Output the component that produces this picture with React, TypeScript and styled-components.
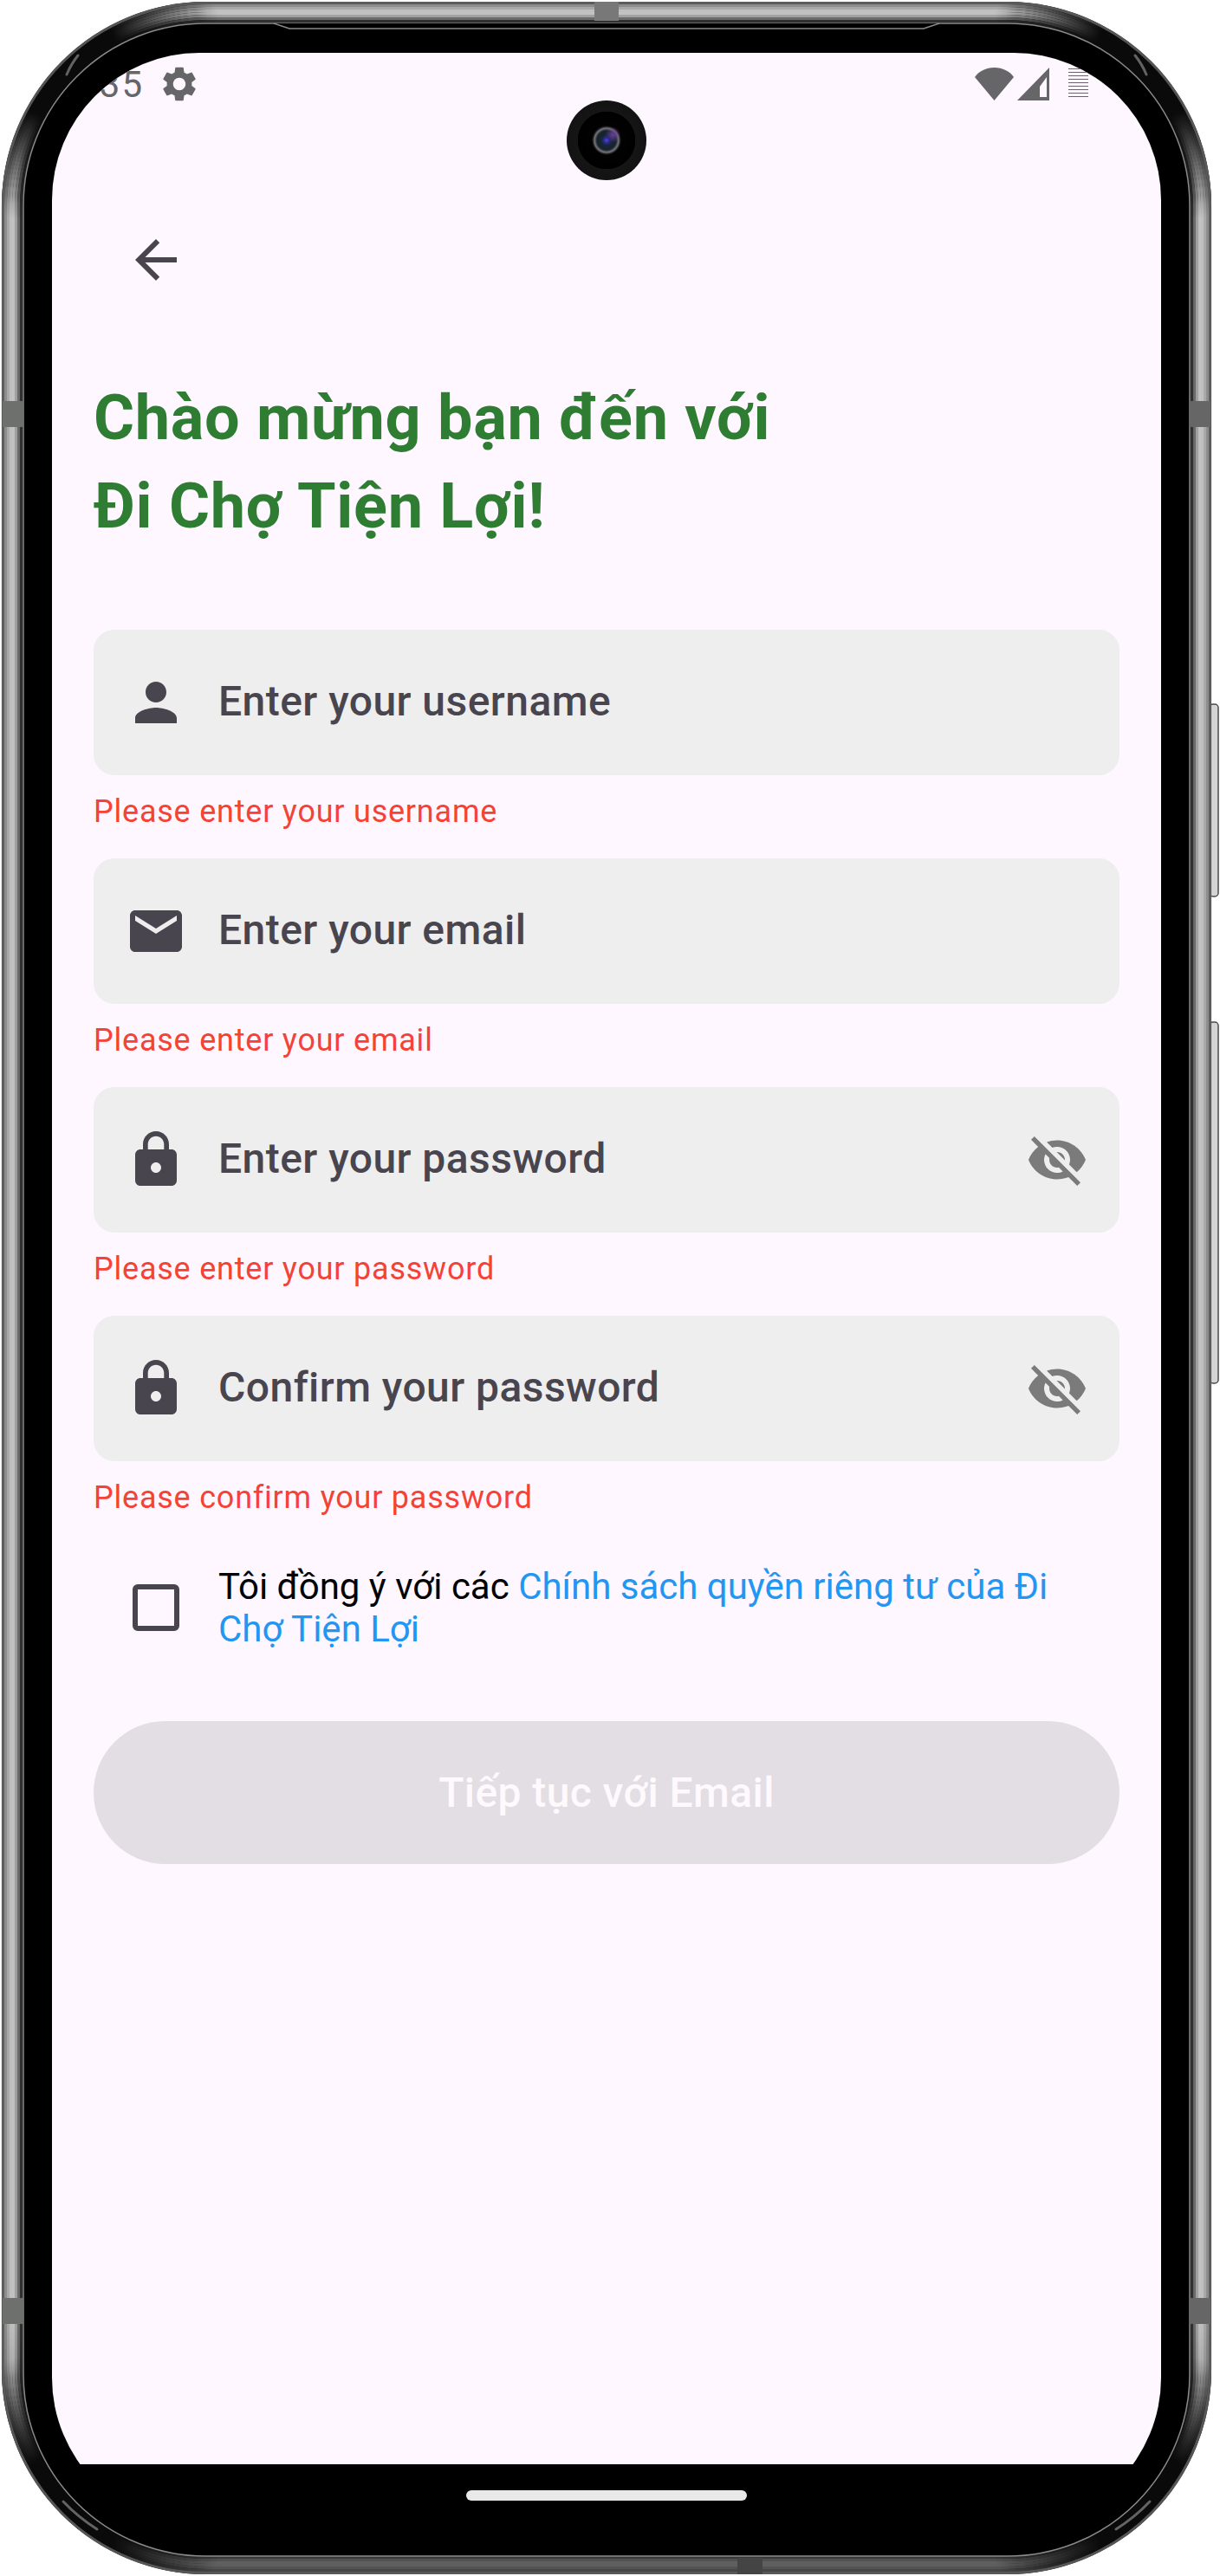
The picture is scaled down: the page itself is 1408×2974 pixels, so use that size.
import styled, { createGlobalStyle } from "styled-components";
import {
	MdArrowBack,
	MdEmail,
	MdLock,
	MdPerson,
	MdSettings,
	MdVisibilityOff,
} from "react-icons/md";
import type { IconType } from "react-icons";

const GlobalStyle = createGlobalStyle`
	html, body {
		margin: 0;
		padding: 0;
		background: #fff;
	}
	* {
		box-sizing: border-box;
	}
`;

const Page = styled.div`
	position: relative;
	width: 1408px;
	height: 2974px;
	overflow: hidden;
	background: #fff;
	font-family: Roboto, "Noto Sans", sans-serif;
`;
const Frame = styled.svg`
	position: absolute;
	top: 0;
	left: 0;
`;
const Bezel = styled.div`
	position: relative;
	padding: 61px 68px 0 60px;
`;
const ScreenClip = styled.div`
	height: 2784px;
	overflow: hidden;
`;
const Screen = styled.div`
	position: relative;
	height: 2854px;
	border-radius: 170px;
	overflow: hidden;
	background: #fef7ff;
`;
const HomeBar = styled.div`
	width: 324px;
	height: 12px;
	margin: 30px 0 0 478px;
	border-radius: 6px;
	background: #e9e9e9;
`;
const StatusBar = styled.div`
	display: flex;
	align-items: center;
	justify-content: space-between;
	height: 38px;
	margin-top: 17px;
	padding: 0 84px 0 14px;
	color: #666568;
`;
const StatusGroup = styled.div<{ $gap: number }>`
	display: flex;
	align-items: center;
	gap: ${(props) => props.$gap}px;
`;
const Clock = styled.span`
	width: 92px;
	font-size: 42px;
	letter-spacing: 2px;
	text-align: right;
	white-space: nowrap;
`;
const BatterySlot = styled.div`
	margin-left: 18px;
`;
const Camera = styled.div`
	position: absolute;
	top: 55px;
	left: 594px;
	width: 92px;
	height: 92px;
	border-radius: 50%;
	background:
		radial-gradient(circle at 50% 50%, #5a3ff0 0, #2a2a90 3px, transparent 6px),
		radial-gradient(circle at 58% 43%, #6a3f9a 0, transparent 9px),
		radial-gradient(
			circle at 50% 50%,
			#1d2a38 0,
			#16222e 11px,
			#77777c 14px,
			#2a2a2c 15.5px,
			#020202 17px,
			#000 33px,
			#151515 33.5px,
			#131313 46px
		);
`;
const BackRow = styled.div`
	display: flex;
	margin-top: 148px;
	padding-left: 84px;
	color: #49454f;
`;
const Content = styled.div`
	padding: 0 48px;
`;
const Title = styled.h1`
	margin: 96px 0 91px;
	font-size: 72px;
	font-weight: 700;
	line-height: 102px;
	letter-spacing: 0.7px;
	color: #2e7d32;
`;
const Field = styled.div`
	display: flex;
	align-items: center;
	gap: 36px;
	height: 168px;
	padding: 0 36px;
	border-radius: 24px;
	background: #eeeeee;
	color: #49454f;
`;
const Placeholder = styled.span`
	flex: 1;
	padding-bottom: 3px;
	font-size: 48px;
	font-weight: 500;
	line-height: 56px;
	letter-spacing: 0.45px;
`;
const EyeIcon = styled(MdVisibilityOff)`
	color: #7b7b7b;
`;
const ErrorText = styled.div`
	margin: 21px 0 33px;
	font-size: 36px;
	line-height: 42px;
	letter-spacing: 0.78px;
	color: #f44336;
`;
const Consent = styled.div`
	display: flex;
	align-items: center;
	gap: 45px;
	margin-top: 57px;
	padding: 0 48px 0 45px;
`;
const CheckBox = styled.div`
	flex: none;
	width: 54px;
	height: 54px;
	border: 6px solid #49454f;
	border-radius: 6px;
`;
const ConsentText = styled.p`
	margin: 0;
	font-size: 42px;
	line-height: 49px;
	color: #000;
`;
const PolicyLink = styled.span`
	color: #2196f3;
`;
const SubmitButton = styled.div`
	display: flex;
	align-items: center;
	justify-content: center;
	height: 165px;
	margin-top: 82px;
	border-radius: 83px;
	background: #e3dde4;
	font-size: 48px;
	font-weight: 500;
	letter-spacing: 0.4px;
	color: #fdf9fd;
`;

const fields: { icon: IconType; label: string; error: string; secret?: boolean }[] = [
	{ icon: MdPerson, label: "Enter your username", error: "Please enter your username" },
	{ icon: MdEmail, label: "Enter your email", error: "Please enter your email" },
	{ icon: MdLock, label: "Enter your password", error: "Please enter your password", secret: true },
	{ icon: MdLock, label: "Confirm your password", error: "Please confirm your password", secret: true },
];

// metal band profile, outer ring first
const bandColors = ["#5c5c5c", "#8c8c8c", "#a8a8a8", "#c0c0c0", "#c2c2c2", "#a2a2a2", "#6c6c6c", "#303030"];

function DeviceFrame() {
	return (
		<Frame width="1408" height="2974" viewBox="0 0 1408 2974">
			<defs>
				<linearGradient id="fade" x1="0" y1="0" x2="0" y2="1">
					<stop offset="0.9" stopColor="#fff" />
					<stop offset="0.985" stopColor="#777" />
				</linearGradient>
				<radialGradient id="blob">
					<stop offset="0.35" stopColor="#000" />
					<stop offset="1" stopColor="#000" stopOpacity="0" />
				</radialGradient>
				<mask id="bandMask" maskUnits="userSpaceOnUse" x="0" y="0" width="1408" height="2974">
					<rect width="1408" height="2974" fill="url(#fade)" />
					<circle cx="70" cy="70" r="190" fill="url(#blob)" />
					<circle cx="1330" cy="70" r="190" fill="url(#blob)" />
					<circle cx="70" cy="2904" r="190" fill="url(#blob)" />
					<circle cx="1330" cy="2904" r="190" fill="url(#blob)" />
				</mask>
			</defs>
			<rect x="1396" y="813" width="10" height="222" rx="4" fill="#d4d4d4" stroke="#4a4a4a" strokeWidth="1.5" />
			<rect x="1396" y="1180" width="10" height="417" rx="4" fill="#d4d4d4" stroke="#4a4a4a" strokeWidth="1.5" />
			<rect x="2" y="2" width="1396" height="2970" rx="236" fill="#0a0a0a" />
			<rect x="3.5" y="3.5" width="1393" height="2967" rx="234" fill="none" stroke="#555" strokeWidth="3" />
			<g mask="url(#bandMask)" fill="none" strokeWidth="3.2">
				{bandColors.map((color, i) => {
					const inset = 3.5 + i * 3;
					return (
						<rect
							key={color + i}
							x={inset}
							y={inset}
							width={1400 - 2 * inset}
							height={2974 - 2 * inset}
							rx={236 - i * 3}
							stroke={color}
						/>
					);
				})}
			</g>
			<g fill="none" stroke="#636363" strokeWidth="3" strokeLinecap="round">
				<path d="M77 86Q82 74 90 64" />
				<path d="M1323 86Q1318 74 1310 64" />
				<path d="M73 2888Q90 2906 112 2920" />
				<path d="M1327 2888Q1310 2906 1288 2920" />
			</g>
			<rect x="27" y="27" width="1346" height="2924" rx="210" fill="#000" stroke="#8a8a8a" strokeWidth="1.5" />
			<path d="M316 27 L334 33 H1066 L1084 27" fill="#000" stroke="#8a8a8a" strokeWidth="1.5" />
			<rect x="3" y="463" width="24" height="30" fill="#6e706e" />
			<rect x="3" y="2653" width="24" height="30" fill="#6e706e" />
			<rect x="1373" y="463" width="24" height="30" fill="#666" />
			<rect x="1373" y="2653" width="24" height="30" fill="#666" />
			<rect x="686" y="2" width="28" height="22" fill="#787878" />
			<rect x="851" y="2953" width="29" height="19" fill="#444" />
		</Frame>
	);
}

function WifiIcon() {
	return (
		<svg width="45" height="38" viewBox="0 0 45 38" fill="currentColor">
			<path d="M22.5 38 0 11C5 4 13 0 22.5 0S40 4 45 11Z" />
		</svg>
	);
}

function SignalIcon() {
	return (
		<svg width="37" height="38" viewBox="0 0 37 38" fill="currentColor" fillRule="evenodd">
			<path d="M37 0V38H0ZM26 22V34H34V11Z" />
		</svg>
	);
}

function BatteryIcon() {
	return (
		<svg width="23" height="36" viewBox="0 0 23 36" stroke="currentColor" strokeWidth="1">
			{[...Array(9)].map((_, i) => (
				<line key={i} x1="0" x2="23" y1={2.5 + i * 4} y2={2.5 + i * 4} />
			))}
		</svg>
	);
}

export default function App() {
	return (
		<Page>
			<GlobalStyle />
			<DeviceFrame />
			<Bezel>
				<ScreenClip>
					<Screen>
						<Camera />
						<StatusBar>
							<StatusGroup $gap={17}>
								<Clock>3:35</Clock>
								<MdSettings size={48} />
							</StatusGroup>
							<StatusGroup $gap={4}>
								<WifiIcon />
								<SignalIcon />
								<BatterySlot>
									<BatteryIcon />
								</BatterySlot>
							</StatusGroup>
						</StatusBar>
						<BackRow>
							<MdArrowBack size={72} />
						</BackRow>
						<Content>
							<Title>
								Chào mừng bạn đến với
								<br />
								Đi Chợ Tiện Lợi!
							</Title>
							{fields.map((field) => (
								<div key={field.label}>
									<Field>
										<field.icon size={72} />
										<Placeholder>{field.label}</Placeholder>
										{field.secret && <EyeIcon size={72} />}
									</Field>
									<ErrorText>{field.error}</ErrorText>
								</div>
							))}
							<Consent>
								<CheckBox />
								<ConsentText>
									Tôi đồng ý với các{" "}
									<PolicyLink>Chính sách quyền riêng tư của Đi Chợ Tiện Lợi</PolicyLink>
								</ConsentText>
							</Consent>
							<SubmitButton>Tiếp tục với Email</SubmitButton>
						</Content>
					</Screen>
				</ScreenClip>
				<HomeBar />
			</Bezel>
		</Page>
	);
}
